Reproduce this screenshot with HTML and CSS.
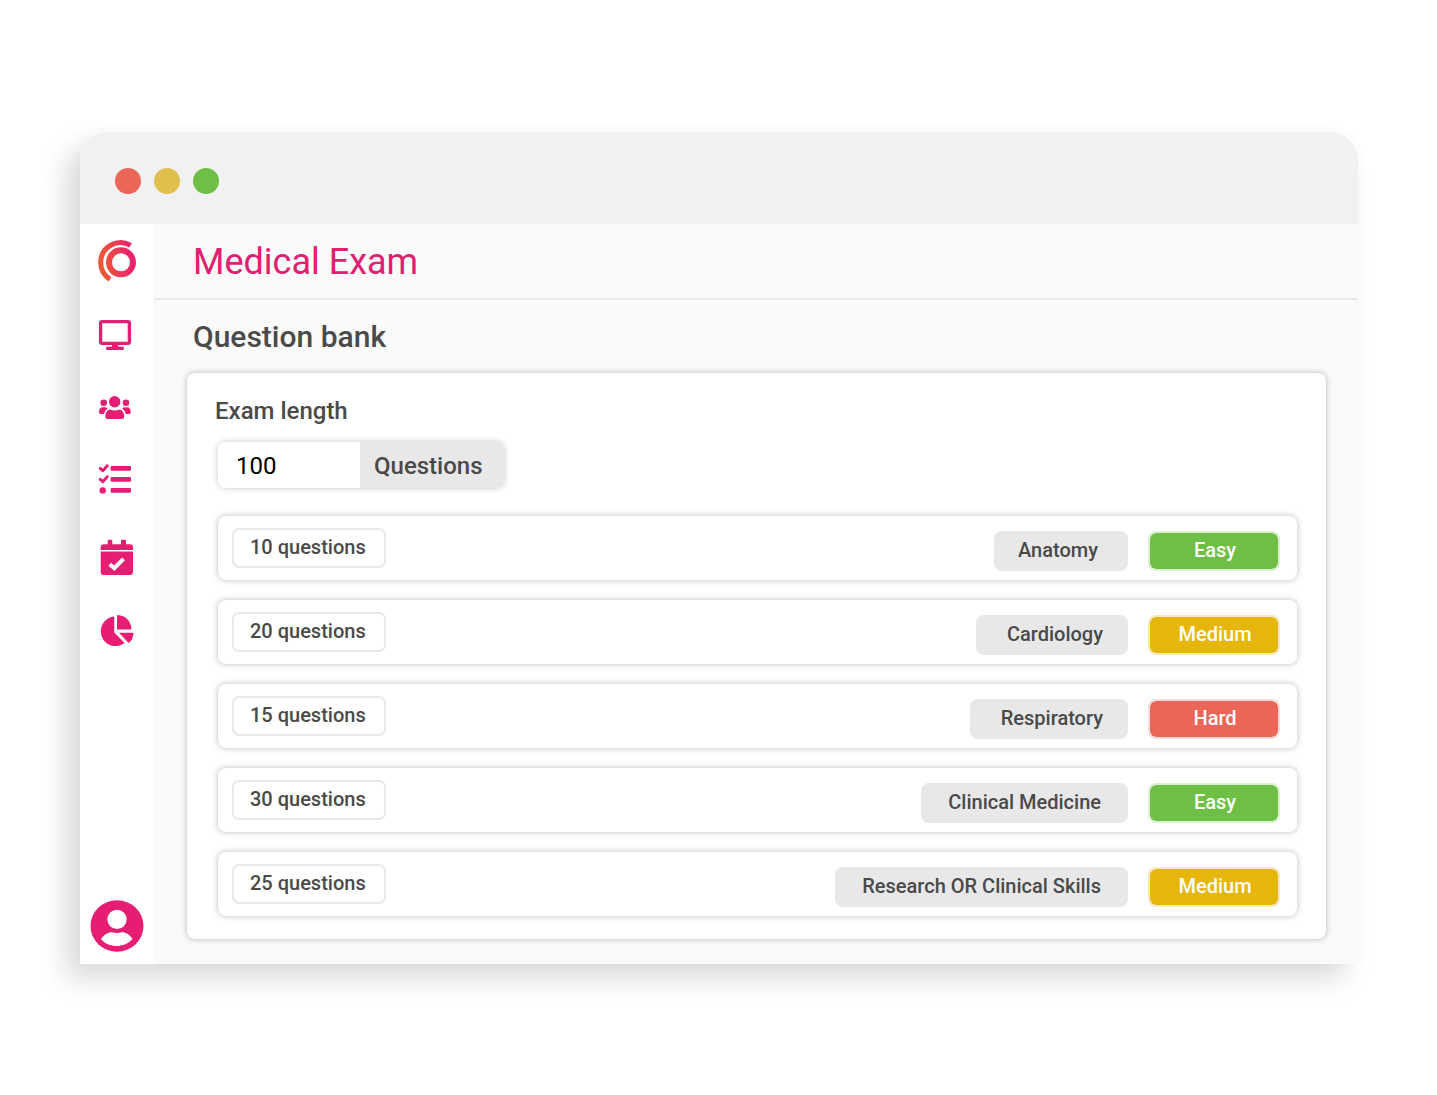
FILE: index.html
```html
<!DOCTYPE html>
<html lang="en">
<head>
<meta charset="utf-8">
<title>Medical Exam</title>
<link rel="stylesheet" href="styles.css">
</head>
<body>
<div class="window">
  <div class="titlebar">
    <span class="dot dot-red"></span>
    <span class="dot dot-yellow"></span>
    <span class="dot dot-green"></span>
  </div>
  <div class="app">
    <nav class="sidebar" aria-label="Main">
      <a href="#" aria-label="Home">
        <svg class="icon" viewBox="0 0 38 40">
          <defs><linearGradient id="brand" gradientUnits="userSpaceOnUse" x1="4" y1="22" x2="34" y2="18"><stop offset="0" stop-color="#ef5733"/><stop offset="1" stop-color="#e9246f"/></linearGradient></defs>
          <circle cx="23" cy="21.3" r="12" fill="none" stroke="url(#brand)" stroke-width="6"/>
          <path d="M32.6 4.4A19.800 19.800 0 0 0 2.700 21.500A19.800 19.800 0 0 0 12 38.300" fill="none" stroke="url(#brand)" stroke-width="5"/>
        </svg>
      </a>
      <a href="#" aria-label="Exams">
        <svg class="icon" viewBox="0 0 38 40">
          <rect x="2.6" y="6.6" width="28.8" height="21.8" rx="1.6" fill="none" stroke="currentColor" stroke-width="3.4"/>
          <path d="M14.400 29h5.200l1 4h-7.200z"/>
          <rect x="8" y="31.800" width="18" height="3.300" rx="1.500"/>
        </svg>
      </a>
      <a href="#" aria-label="Students">
        <svg class="icon" viewBox="0 0 38 40">
          <circle cx="16.700" cy="12.700" r="5.700"/>
          <circle cx="5.700" cy="13.700" r="3.300"/>
          <circle cx="28" cy="13.700" r="3.300"/>
          <path d="M7.300 27.500C7.300 23.500 9.500 20.800 12 20.500Q16.700 22.500 21.500 20.500C24 20.800 26.200 23.500 26.200 27.500Q26.200 30 23.800 30H9.700Q7.300 30 7.300 27.500Z"/>
          <path d="M1 23.200C1 20 2.500 18.300 5 18.300H7Q8.500 18.300 9.600 19.400Q6.600 21.500 6 25H2.500Q1 25 1 23.200Z"/>
          <path d="M32.800 23.200C32.800 20 31.300 18.300 28.800 18.300H26.800Q25.300 18.300 24.200 19.400Q27.200 21.500 27.800 25H31.300Q32.800 25 32.800 23.200Z"/>
        </svg>
      </a>
      <a href="#" aria-label="Tasks">
        <svg class="icon" viewBox="0 0 38 40">
          <rect x="12.600" y="2.900" width="20.400" height="4.900" rx="1"/>
          <rect x="12.600" y="13.900" width="20.400" height="4.900" rx="1"/>
          <rect x="12.600" y="24.900" width="20.400" height="4.900" rx="1"/>
          <path d="M2.200 5.400L4.800 7.700L9.300 2.700M2.200 16.400L4.800 18.700L9.300 13.700" fill="none" stroke="currentColor" stroke-width="2.900" stroke-linecap="round" stroke-linejoin="round"/>
          <circle cx="4.700" cy="27.400" r="3.200"/>
        </svg>
      </a>
      <a href="#" aria-label="Calendar">
        <svg class="icon" viewBox="0 0 38 40">
          <path d="M2.700 13V10.300Q2.700 7.300 5.700 7.300H9.700V4Q9.700 2.700 11 2.700H13Q14.300 2.700 14.300 4V7.300H23V4Q23 2.700 24.300 2.700H26.700Q28 2.700 28 4V7.300H32Q35 7.300 35 10.300V13Z"/>
          <path d="M2.700 14.400H35V35Q35 38 32 38H5.700Q2.700 38 2.700 35Z"/>
          <path d="M11.700 27.200L16.300 31.200L25.500 21.800" fill="none" stroke="#fff" stroke-width="4"/>
        </svg>
      </a>
      <a href="#" aria-label="Reports">
        <svg class="icon" viewBox="0 0 38 40">
          <path d="M16.300 6.200Q16.300 5.500 15.500 5.600A14.800 14.800 0 1 0 26 32.400Q26.500 32 26 31.500L16.300 21.500Z"/>
          <path d="M19 4.600Q19 4 19.700 4C27.500 4.300 33 10.500 33.400 17.600Q33.400 18.400 32.600 18.400H19Z"/>
          <path d="M21 21.800H34.900Q35.600 21.800 35.500 22.500Q35 28 31.300 31.500Q30.700 32 30.200 31.500Z"/>
        </svg>
      </a>
      <a class="profile" href="#" aria-label="Profile">
        <svg class="avatar" viewBox="0 0 54 52">
          <ellipse cx="27" cy="26" rx="26.500" ry="25.700"/>
          <circle cx="27" cy="19.400" r="9.600" fill="#fff"/>
          <path d="M11 39C14 35 18 32.300 22 32.300Q27 33.800 32 32.300C36 32.300 40 35 42.500 39C38 44 32 46 27 46C21 46 15 44 11 39Z" fill="#fff"/>
        </svg>
      </a>
    </nav>
    <main class="main">
      <header class="header"><h1>Medical Exam</h1></header>
      <section class="content">
        <h2>Question bank</h2>
        <div class="panel">
          <label class="field-label" for="length">Exam length</label>
          <div class="length">
            <input id="length" type="text" value="100">
            <span class="unit">Questions</span>
          </div>
          <ul class="rows">
            <li class="row">
              <input class="count" type="text" value="10 questions" aria-label="Anatomy question count">
              <div class="tags">
                <button class="topic topic-short" type="button">Anatomy</button>
                <button class="level easy" type="button">Easy</button>
              </div>
            </li>
            <li class="row">
              <input class="count" type="text" value="20 questions" aria-label="Cardiology question count">
              <div class="tags">
                <button class="topic" type="button">Cardiology</button>
                <button class="level medium" type="button">Medium</button>
              </div>
            </li>
            <li class="row">
              <input class="count" type="text" value="15 questions" aria-label="Respiratory question count">
              <div class="tags">
                <button class="topic" type="button">Respiratory</button>
                <button class="level hard" type="button">Hard</button>
              </div>
            </li>
            <li class="row">
              <input class="count" type="text" value="30 questions" aria-label="Clinical Medicine question count">
              <div class="tags">
                <button class="topic topic-long" type="button">Clinical Medicine</button>
                <button class="level easy" type="button">Easy</button>
              </div>
            </li>
            <li class="row">
              <input class="count" type="text" value="25 questions" aria-label="Research OR Clinical Skills question count">
              <div class="tags">
                <button class="topic topic-long" type="button">Research OR Clinical Skills</button>
                <button class="level medium" type="button">Medium</button>
              </div>
            </li>
          </ul>
        </div>
      </section>
    </main>
  </div>
</div>
</body>
</html>
```
FILE: styles.css
```css
* {
  box-sizing: border-box;
}

body {
  margin: 0;
  padding: 132px 79px 80px 80px;
  background: #fff;
  color: #4a4a4a;
  font-family: Roboto, "Liberation Sans", sans-serif;
  font-weight: 500;
}

h1,
h2,
ul {
  margin: 0;
  padding: 0;
}

input,
button {
  margin: 0;
  font: inherit;
  color: inherit;
}

.window {
  border-radius: 28px 28px 0 0;
  box-shadow: -14px 14px 28px rgba(0, 0, 0, 0.15), 0 0 16px rgba(0, 0, 0, 0.02);
}

.titlebar {
  display: flex;
  align-items: center;
  gap: 13px;
  height: 92px;
  padding: 6px 35px 0;
  border-radius: 28px 28px 0 0;
  background: #f1f1f1;
}

.dot {
  width: 26px;
  height: 26px;
  border-radius: 50%;
}

.dot-red {
  background: #eb6659;
}

.dot-yellow {
  background: #e0c04d;
}

.dot-green {
  background: #6fbf47;
}

.app {
  display: flex;
}

.sidebar {
  display: flex;
  flex-direction: column;
  align-items: center;
  gap: 34px;
  width: 74px;
  padding: 17px 0 12px;
  background: #fff;
  color: #e61e73;
}

.sidebar a {
  color: inherit;
}

.icon {
  display: block;
  width: 38px;
  height: 40px;
  overflow: visible;
  fill: currentColor;
}

.profile {
  margin-top: auto;
}

.avatar {
  display: block;
  width: 54px;
  height: 52px;
  fill: currentColor;
}

.main {
  flex: 1;
  min-width: 0;
  background: #fafafa;
}

.header {
  padding: 16px 39px 14px;
  border-bottom: 2px solid #e8e8e8;
}

h1 {
  color: #df2070;
  font-size: 36px;
  font-weight: 400;
  line-height: 44px;
}

.content {
  padding: 19px 32px 25px 33px;
}

h2 {
  padding-left: 6px;
  font-size: 30px;
  font-weight: 500;
  line-height: 36px;
}

.panel {
  margin-top: 18px;
  padding: 22px 29px 23px 28px;
  border-radius: 8px;
  background: #fff;
  box-shadow: 0 0 6px rgba(0, 0, 0, 0.28);
}

.field-label {
  display: block;
  font-size: 24px;
  line-height: 32px;
}

.length {
  display: flex;
  width: 286px;
  height: 46px;
  margin: 15px 0 0 3px;
  border-radius: 8px;
  overflow: hidden;
  font-size: 24px;
  box-shadow: 0 0 6px rgba(0, 0, 0, 0.24);
}

.length input {
  width: 142px;
  padding: 2px 18px 0;
  border: 0;
  background: #fff;
  color: #000;
  font-weight: 400;
}

.unit {
  flex: 1;
  padding-left: 14px;
  background: #e8e8e8;
  line-height: 48px;
}

.rows {
  display: grid;
  gap: 20px;
  margin: 28px 0 0 3px;
  list-style: none;
}

.row {
  display: flex;
  align-items: flex-start;
  justify-content: space-between;
  height: 64px;
  padding: 12px 17px 0 14px;
  border-radius: 8px;
  background: #fff;
  font-size: 20px;
  box-shadow: 0 0 6px rgba(0, 0, 0, 0.27);
}

.count {
  width: 154px;
  height: 40px;
  padding: 0 16px 2px;
  border: 2px solid #e8e8e8;
  border-radius: 7px;
  background: #fff;
}

.tags {
  display: flex;
  gap: 20px;
  padding-top: 3px;
}

.topic,
.level {
  height: 40px;
  border: 0;
  border-radius: 8px;
}

.topic {
  padding: 0 25px 2px 31px;
  background: #e8e8e8;
}

.topic-short {
  padding: 0 30px 2px 24px;
}

.topic-long {
  padding: 0 27px 2px;
}

.level {
  width: 132px;
  padding: 0 0 2px 2px;
  border: 2px solid #e6e6e6;
  background-clip: padding-box;
  color: #fff;
}

.easy {
  border-color: #dcefd3;
  background-color: #6fbf47;
}

.medium {
  border-color: #f3e8c0;
  background-color: #e6b60a;
}

.hard {
  border-color: #f8dcd9;
  background-color: #eb6659;
}
```
